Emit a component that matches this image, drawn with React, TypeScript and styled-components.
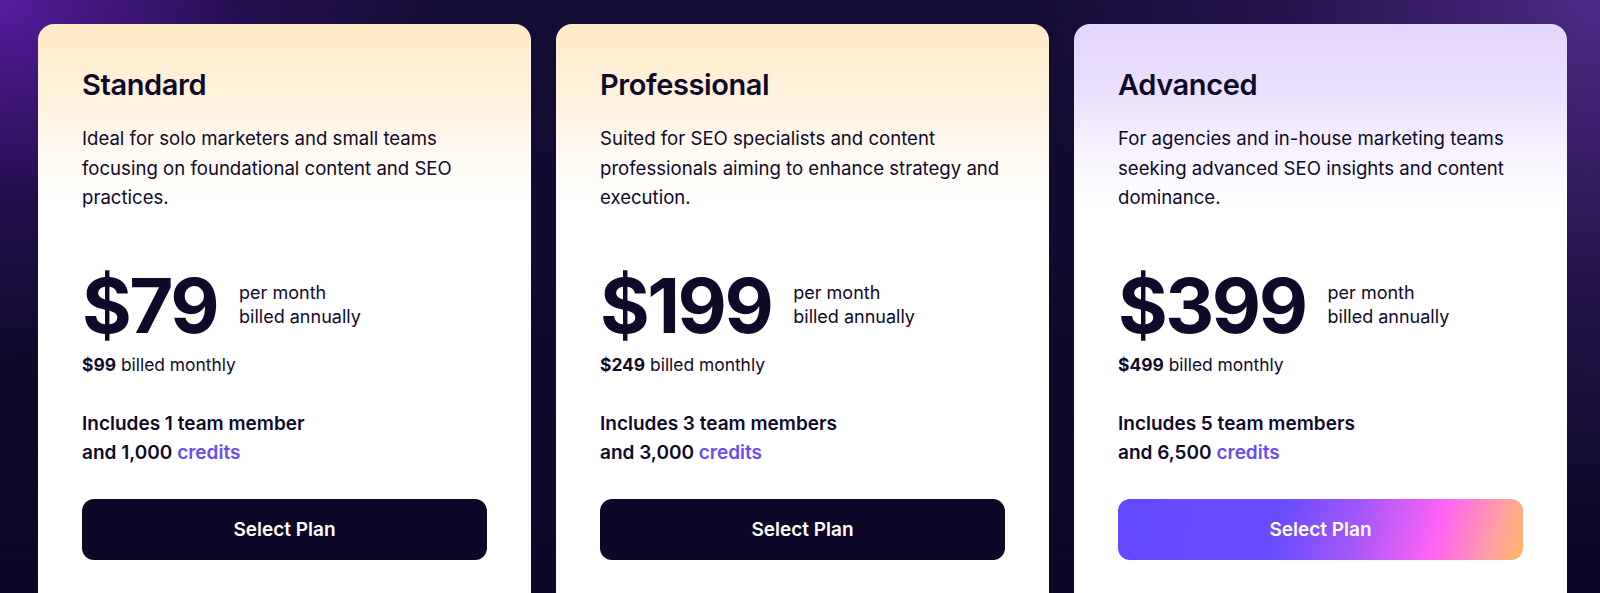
import React from "react";
import styled, { createGlobalStyle } from "styled-components";

const GlobalStyle = createGlobalStyle`
  html, body { margin: 0; padding: 0; }
  body {
    background: #0f0a2b;
    font-family: Inter, "Noto Sans", sans-serif;
    -webkit-font-smoothing: antialiased;
  }
`;

const Page = styled.div`
  width: 1600px;
  height: 593px;
  overflow: hidden;
  box-sizing: border-box;
  padding: 24px 33px 0 38px;
  background:
    radial-gradient(ellipse 440px 360px at 0% 0%, rgba(92, 30, 168, 0.9), rgba(60, 20, 120, 0.4) 55%, rgba(15, 10, 43, 0) 100%),
    radial-gradient(ellipse 560px 520px at 100% 0%, rgba(82, 46, 142, 0.9), rgba(60, 30, 110, 0.45) 55%, rgba(15, 10, 43, 0) 100%),
    linear-gradient(180deg, #150c36 0%, #0f0a2b 60%, #0d0826 100%);
`;

const Grid = styled.div`
  display: grid;
  grid-template-columns: repeat(3, 493px);
  column-gap: 25px;
`;

const Card = styled.div<{ $tone: "cream" | "lavender" }>`
  box-sizing: border-box;
  height: 600px;
  border-radius: 16px;
  padding: 42px 44px 0 44px;
  color: #0f0a2a;
  background: ${(p) =>
    p.$tone === "cream"
      ? "linear-gradient(180deg, #fdeac6 0%, #fff2dc 12%, #fff8ee 20%, #ffffff 30%, #ffffff 100%)"
      : "linear-gradient(180deg, #e3d5fc 0%, #ece1fd 12%, #f6f0fe 20%, #ffffff 30%, #ffffff 100%)"};
  display: flex;
  flex-direction: column;
`;

const Title = styled.h2`
  margin: 0;
  font-size: 29px;
  line-height: 38px;
  font-weight: 600;
  letter-spacing: -0.4px;
`;

const Description = styled.p`
  margin: 20px 0 0 0;
  font-size: 18.6px;
  line-height: 29.6px;
  font-weight: 400;
  max-width: 410px;
`;

const PriceRow = styled.div`
  display: flex;
  align-items: center;
  margin-top: 51px;
  gap: 22px;
`;

const Price = styled.div`
  font-size: 76px;
  line-height: 82px;
  font-weight: 700;
  letter-spacing: -2.5px;
`;

const PriceNote = styled.div`
  font-size: 18px;
  line-height: 24px;
  font-weight: 400;
`;

const Monthly = styled.div`
  margin-top: 7px;
  font-size: 17.4px;
  line-height: 24px;
  font-weight: 400;
  strong { font-weight: 700; }
`;

const Includes = styled.div`
  margin-top: 32px;
  font-size: 19px;
  line-height: 29.5px;
  font-weight: 600;
`;

const Credits = styled.span`
  color: #6a4cf7;
`;

const Button = styled.button<{ $accent?: boolean }>`
  margin-top: 31px;
  height: 61px;
  width: 100%;
  border: none;
  border-radius: 12px;
  font-family: inherit;
  font-size: 19px;
  font-weight: 600;
  color: #ffffff;
  cursor: pointer;
  background: ${(p) =>
    p.$accent
      ? "linear-gradient(105deg, #6349ff 0%, #6a4cff 40%, #a257f8 58%, #ff63f5 78%, #ffa0a0 92%, #ffb864 100%)"
      : "#0e0828"};
`;

type Plan = {
  name: string;
  desc: string;
  price: string;
  monthly: string;
  members: string;
  credits: string;
  tone: "cream" | "lavender";
  accent?: boolean;
};

const plans: Plan[] = [
  {
    name: "Standard",
    desc: "Ideal for solo marketers and small teams focusing on foundational content and SEO practices.",
    price: "$79",
    monthly: "$99",
    members: "Includes 1 team member",
    credits: "and 1,000",
    tone: "cream",
  },
  {
    name: "Professional",
    desc: "Suited for SEO specialists and content professionals aiming to enhance strategy and execution.",
    price: "$199",
    monthly: "$249",
    members: "Includes 3 team members",
    credits: "and 3,000",
    tone: "cream",
  },
  {
    name: "Advanced",
    desc: "For agencies and in-house marketing teams seeking advanced SEO insights and content dominance.",
    price: "$399",
    monthly: "$499",
    members: "Includes 5 team members",
    credits: "and 6,500",
    tone: "lavender",
    accent: true,
  },
];

export default function App() {
  return (
    <>
      <GlobalStyle />
      <Page>
        <Grid>
          {plans.map((p) => (
            <Card key={p.name} $tone={p.tone}>
              <Title>{p.name}</Title>
              <Description>{p.desc}</Description>
              <PriceRow>
                <Price>{p.price}</Price>
                <PriceNote>
                  per month
                  <br />
                  billed annually
                </PriceNote>
              </PriceRow>
              <Monthly>
                <strong>{p.monthly}</strong> billed monthly
              </Monthly>
              <Includes>
                {p.members}
                <br />
                {p.credits} <Credits>credits</Credits>
              </Includes>
              <Button $accent={p.accent}>Select Plan</Button>
            </Card>
          ))}
        </Grid>
      </Page>
    </>
  );
}
